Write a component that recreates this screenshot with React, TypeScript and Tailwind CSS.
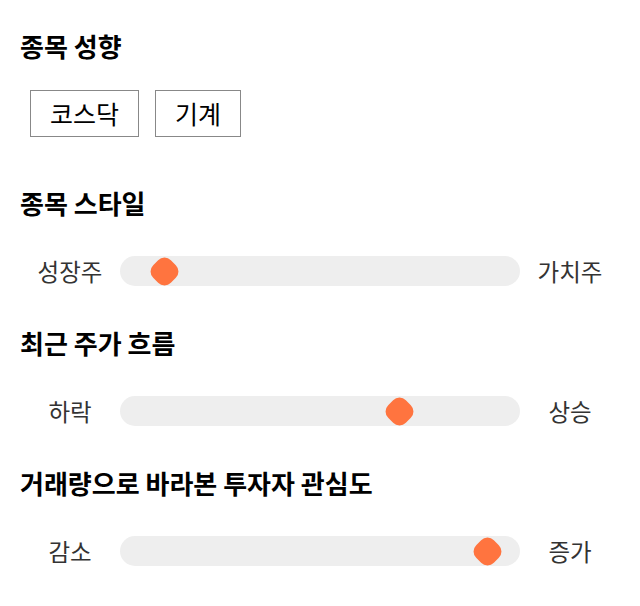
import React from "react";

const font = { fontFamily: '"Noto Sans CJK KR", "Noto Sans", sans-serif' };

function Heading({ children, className = "" }: { children: React.ReactNode; className?: string }) {
  return (
    <h2 className={`text-[26px] leading-[32px] font-bold text-black ${className}`}>{children}</h2>
  );
}

function Slider({ left, right, pos, className = "" }: { left: string; right: string; pos: number; className?: string }) {
  return (
    <div className={`flex items-center h-[30px] ${className}`}>
      <div className="w-[100px] text-center text-[23.5px] leading-[30px] text-[#333]">{left}</div>
      <div className="relative flex-1 h-[30px] rounded-full bg-[#eeeeee]">
        <div
          className="absolute top-[2.5px] w-[25px] h-[25px] rotate-45 rounded-[9px] bg-[#ff743f]"
          style={{ left: `${pos - 12.5}px` }}
        />
      </div>
      <div className="w-[100px] text-center text-[23.5px] leading-[30px] text-[#333]">{right}</div>
    </div>
  );
}

export default function App() {
  return (
    <div className="w-[640px] h-[606px] bg-white px-[20px] pt-[30px]" style={font}>
      <Heading>종목 성향</Heading>
      <div className="flex gap-[16px] pl-[10px] mt-[28px]">
        <div className="h-[47px] px-[19px] border border-[#888] flex items-center text-[25px] text-black">코스닥</div>
        <div className="h-[47px] px-[19px] border border-[#888] flex items-center text-[25px] text-black">기계</div>
      </div>
      <Heading className="mt-[50px]">종목 스타일</Heading>
      <Slider left="성장주" right="가치주" pos={44} className="mt-[37px]" />
      <Heading className="mt-[41px]">최근 주가 흐름</Heading>
      <Slider left="하락" right="상승" pos={279} className="mt-[37px]" />
      <Heading className="mt-[41px]">거래량으로 바라본 투자자 관심도</Heading>
      <Slider left="감소" right="증가" pos={367} className="mt-[37px]" />
    </div>
  );
}
